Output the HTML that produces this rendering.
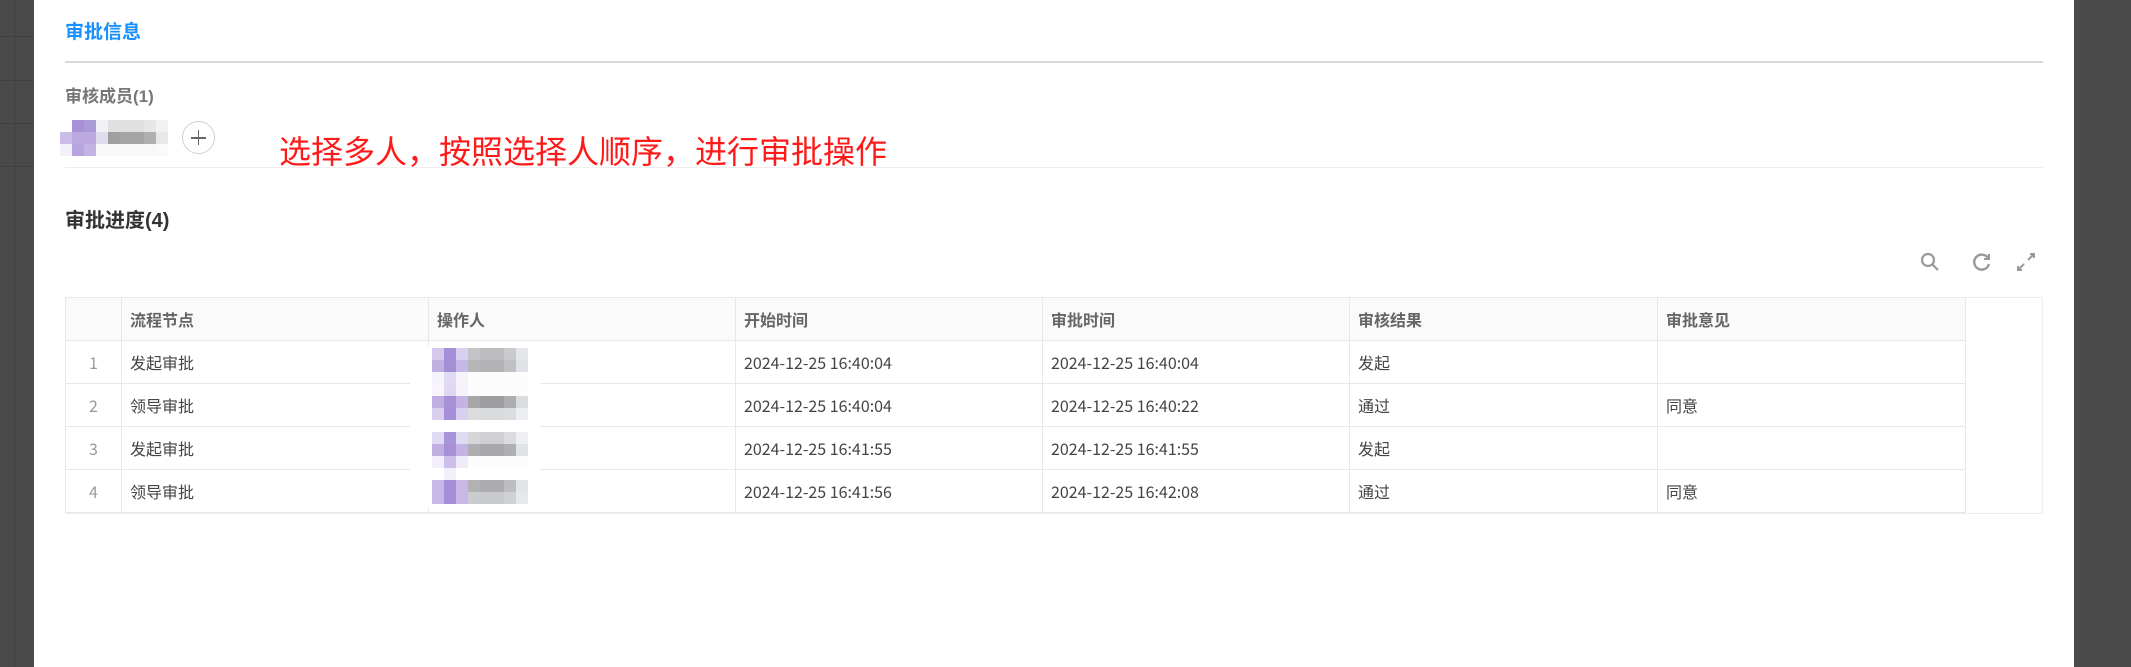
<!DOCTYPE html>
<html><head><meta charset="utf-8"><style>
*{margin:0;padding:0;box-sizing:border-box}
body{width:2131px;height:667px;overflow:hidden;background:#4a4a4a;position:relative;font-family:"Liberation Sans","Noto Sans CJK SC",sans-serif}
.a{position:absolute}
.panel{left:34px;top:0;width:2040px;height:667px;background:#fff}
.t{white-space:nowrap}
table{border-collapse:collapse;position:absolute;left:65px;top:297px;font-size:16px;color:#444;font-family:"Noto Sans CJK SC",sans-serif;table-layout:fixed}
td,th{border:1px solid #e8e8e8;height:43px;padding:0 8px;text-align:left;white-space:nowrap;line-height:20px;vertical-align:middle}
th{background:#fafafa;color:#666;font-weight:bold}
td.i{text-align:center;color:#999}
.px{position:absolute;height:12px;width:96px}
</style></head><body>
<div class="a" style="left:14px;top:0;width:1px;height:667px;background:#404040"></div>
<div class="a" style="left:0;top:36px;width:34px;height:1px;background:#404040"></div>
<div class="a" style="left:0;top:80px;width:34px;height:1px;background:#404040"></div>
<div class="a" style="left:0;top:123px;width:34px;height:1px;background:#404040"></div>
<div class="a" style="left:0;top:166px;width:34px;height:1px;background:#404040"></div>
<div class="a panel"></div>

<div class="a t" style="left:65px;top:17px;font-size:19px;font-weight:bold;color:#1890ff">审批信息</div>
<div class="a" style="left:65px;top:61px;width:1978px;height:2px;background:#d9d9d9"></div>
<div class="a t" style="left:65px;top:82px;font-size:17px;font-weight:bold;color:#777">审核成员(1)</div>

<div class="a" style="left:60px;top:120px;width:108px;height:12px;background:linear-gradient(90deg,#fff 0 12px,#a890d8 12px 24px,#a89bd8 24px 36px,#f2f0f6 36px 48px,#e0e0e0 48px 84px,#e6e6e6 84px 96px,#f2f2f2 96px);border-radius:10px 0 0 0"></div>
<div class="a" style="left:60px;top:132px;width:108px;height:12px;background:linear-gradient(90deg,#cbbde8 0 12px,#bca9e2 12px 36px,#e0dcee 36px 48px,#a0a0a0 48px 60px,#a4a4a4 60px 84px,#b0b0b0 84px 96px,#e8e8e8 96px)"></div>
<div class="a" style="left:60px;top:144px;width:108px;height:12px;background:linear-gradient(90deg,#f2f0f8 0 12px,#b8a4e0 12px 24px,#c4b4e6 24px 36px,#f8f8f8 36px 96px,#fafafa 96px)"></div>
<div class="a" style="left:182px;top:121px;width:33px;height:33px;border:1px solid #d0d0d0;border-radius:50%"></div>
<div class="a" style="left:191px;top:137px;width:15px;height:1.6px;background:#666"></div>
<div class="a" style="left:197.7px;top:130px;width:1.6px;height:15px;background:#666"></div>
<div class="a t" style="left:279px;top:131px;font-size:32px;color:#ff1a1a;font-family:'Noto Sans CJK SC',sans-serif;line-height:38px">选择多人，按照选择人顺序，进行审批操作</div>
<div class="a" style="left:65px;top:167px;width:1978px;height:1px;background:#eee"></div>

<div class="a t" style="left:65px;top:204px;font-size:20px;font-weight:bold;color:#333">审批进度(4)</div>

<svg class="a" style="left:1918px;top:250px" width="24" height="24" viewBox="0 0 24 24" fill="none" stroke="#999" stroke-width="2.2"><circle cx="10" cy="10" r="6"/><path d="M14.5 14.5 L20 20"/></svg>
<svg class="a" style="left:1970px;top:250px" width="24" height="24" viewBox="0 0 24 24" fill="none" stroke="#999" stroke-width="2.4"><path d="M18 8 A7.5 7.5 0 1 0 19 14"/><path d="M19 4 V9 H14" stroke-width="2"/></svg>
<svg class="a" style="left:2014px;top:250px" width="24" height="24" viewBox="0 0 24 24" fill="none" stroke="#999" stroke-width="2"><path d="M14 10 L20 4 M16 4 H20 V8 M10 14 L4 20 M4 16 V20 H8"/></svg>

<div class="a" style="left:65px;top:297px;width:1978px;height:217px;border:1px solid #eee;border-left:none"></div>
<table>
<colgroup><col style="width:56px"><col style="width:307px"><col style="width:307px"><col style="width:307px"><col style="width:307px"><col style="width:308px"><col style="width:308px"></colgroup>
<tr><th></th><th>流程节点</th><th>操作人</th><th>开始时间</th><th>审批时间</th><th>审核结果</th><th>审批意见</th></tr>
<tr><td class="i">1</td><td>发起审批</td><td></td><td>2024-12-25 16:40:04</td><td>2024-12-25 16:40:04</td><td>发起</td><td></td></tr>
<tr><td class="i">2</td><td>领导审批</td><td></td><td>2024-12-25 16:40:04</td><td>2024-12-25 16:40:22</td><td>通过</td><td>同意</td></tr>
<tr><td class="i">3</td><td>发起审批</td><td></td><td>2024-12-25 16:41:55</td><td>2024-12-25 16:41:55</td><td>发起</td><td></td></tr>
<tr><td class="i">4</td><td>领导审批</td><td></td><td>2024-12-25 16:41:56</td><td>2024-12-25 16:42:08</td><td>通过</td><td>同意</td></tr>
</table>

<div class="a" style="left:410px;top:346px;width:130px;height:162px;background:#fff;border-radius:14px"></div>
<div class="px" style="left:432px;top:348px;background:linear-gradient(90deg,#d4c8ec 0 12px,#a68fd8 12px 24px,#d8d0ee 24px 36px,#c4c4c8 36px 48px,#bdbdc0 48px 72px,#c8cacd 72px 84px,#e4e6ea 84px)"></div>
<div class="px" style="left:432px;top:360px;background:linear-gradient(90deg,#c0b0e2 0 12px,#a48ed6 12px 24px,#c5b7e6 24px 36px,#b6b6b9 36px 48px,#b3b3b6 48px 72px,#bec0c3 72px 84px,#dfe2e6 84px)"></div>
<div class="px" style="left:432px;top:372px;background:linear-gradient(90deg,#f6f4fb 0 12px,#e2daf2 12px 24px,#f6f4fb 24px 36px,#fcfcfd 36px)"></div>
<div class="px" style="left:432px;top:384px;background:linear-gradient(90deg,#f8f6fc 0 12px,#e0d8f2 12px 24px,#f4f2fa 24px 36px,#fcfcfd 36px)"></div>
<div class="px" style="left:432px;top:396px;background:linear-gradient(90deg,#bfaee2 0 12px,#a890d8 12px 24px,#c4b4e6 24px 36px,#a6a6a8 36px 48px,#9e9ea0 48px 72px,#aeaeb0 72px 84px,#dadde0 84px)"></div>
<div class="px" style="left:432px;top:408px;background:linear-gradient(90deg,#d8d0ee 0 12px,#a68fd8 12px 24px,#d8d0ee 24px 36px,#dcdcde 36px 48px,#d8dadc 48px 72px,#dcdde0 72px 84px,#eceff2 84px)"></div>
<div class="px" style="left:432px;top:432px;background:linear-gradient(90deg,#e0daf2 0 12px,#a994da 12px 24px,#dedaf2 24px 36px,#d6d6d8 36px 48px,#d0d0d2 48px 72px,#dcdcde 72px 84px,#eeeff2 84px)"></div>
<div class="px" style="left:432px;top:444px;background:linear-gradient(90deg,#c0b0e2 0 12px,#a890d8 12px 24px,#c4b4e6 24px 36px,#aeaeb0 36px 48px,#a8a8aa 48px 72px,#b0b0b2 72px 84px,#dfe2e6 84px)"></div>
<div class="px" style="left:432px;top:456px;background:linear-gradient(90deg,#f2eefa 0 12px,#cdbfea 12px 24px,#efebf8 24px 36px,#fcfcfd 36px)"></div>
<div class="px" style="left:432px;top:468px;background:linear-gradient(90deg,#fff 0 12px,#f2f0fa 12px 24px,#fff 24px)"></div>
<div class="px" style="left:432px;top:480px;background:linear-gradient(90deg,#c8b8e8 0 12px,#a68fd8 12px 24px,#c8b8e8 24px 36px,#b2b2b4 36px 48px,#acacae 48px 72px,#bcbec0 72px 84px,#e2e4e8 84px)"></div>
<div class="px" style="left:432px;top:492px;background:linear-gradient(90deg,#c8b8e8 0 12px,#a68fd8 12px 24px,#c8b8e8 24px 36px,#cacccf 36px 48px,#c8cacd 48px 72px,#cfd1d4 72px 84px,#e6e8eb 84px)"></div>
</body></html>
